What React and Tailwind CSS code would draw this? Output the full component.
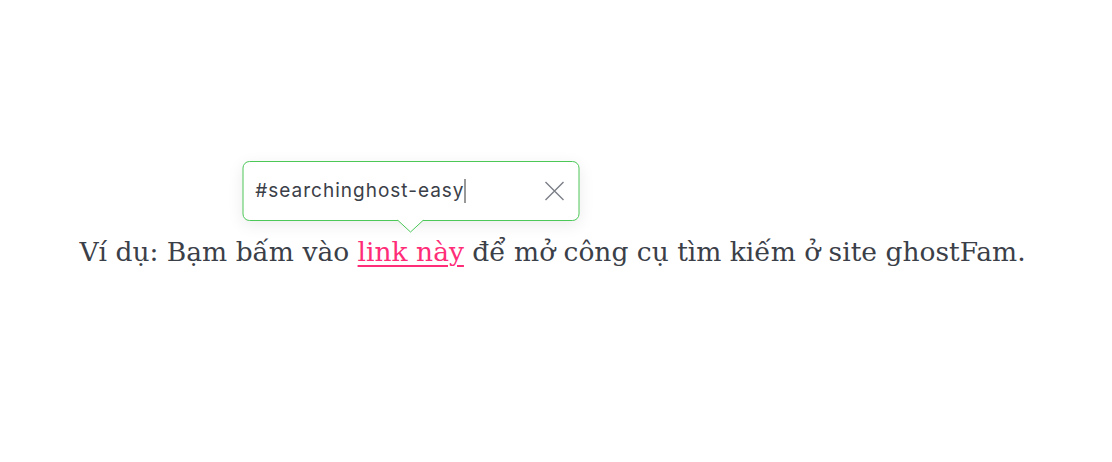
import React from 'react';

export default function App() {
    return (
        <div className="w-full h-[462px] bg-white flex justify-center pr-[7px]">
            <p
                className="mt-[230px] text-[26.5px] leading-[44px] text-[#3b4048] whitespace-nowrap"
                style={{ fontFamily: '"DejaVu Serif", "Liberation Serif", serif' }}
            >
                Ví dụ: Bạm bấm vào{' '}
                <span className="relative inline-block">
                    {/* search popup over the link */}
                    <span className="absolute left-1/2 -translate-x-1/2 bottom-[53px] w-[337px] h-[60px] bg-white border border-[#4cc859] rounded-[7px] shadow-[0_4px_16px_rgba(0,0,0,0.08)] flex items-center justify-between pl-[12px] pr-[12px]">
                        <span
                            className="text-[19px] tracking-[1px] text-[#3b4048] flex items-center"
                            style={{ fontFamily: 'Inter, "Noto Sans", sans-serif' }}
                        >
                            #searchinghost-easy
                            <span className="inline-block w-px h-[24px] bg-[#333] -ml-[0.5px]" />
                        </span>
                        <svg width="22" height="22" viewBox="0 0 22 22" className="text-[#7b7f86] mr-[1px]">
                            <path d="M2 2 L20 20 M20 2 L2 20" stroke="currentColor" strokeWidth="1.4" fill="none" />
                        </svg>
                        {/* arrow */}
                        <svg width="26" height="14" viewBox="0 0 26 14" className="absolute left-1/2 -translate-x-1/2 -bottom-[13px]">
                            <path d="M0 1 L13 13 L26 1" fill="white" stroke="#4cc859" strokeWidth="1" />
                            <rect x="1" y="-1" width="24" height="2" fill="white" />
                        </svg>
                    </span>
                    <a href="#" className="text-[#ff2d78] underline underline-offset-[4px] decoration-[2px]">link này</a>
                </span>{' '}
                để mở công cụ tìm kiếm ở site ghostFam.
            </p>
        </div>
    );
}
